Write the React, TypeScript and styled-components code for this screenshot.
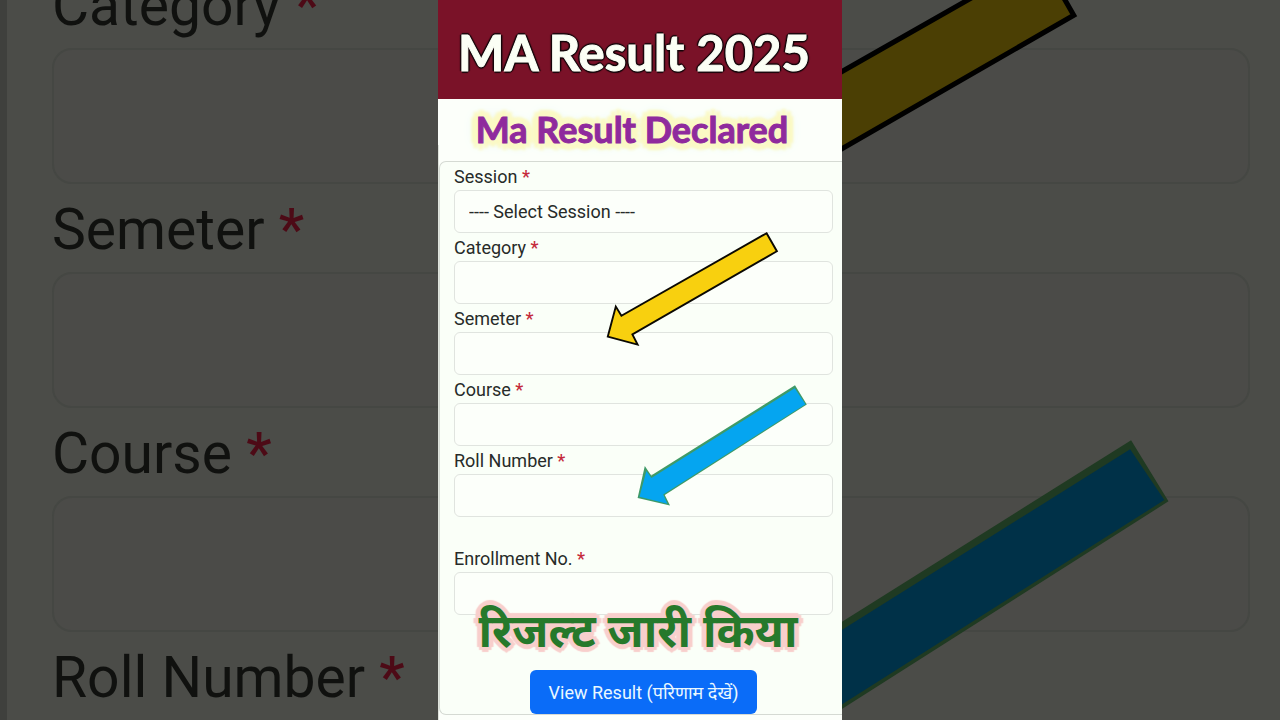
import React from "react";
import styled, { createGlobalStyle } from "styled-components";

const GlobalStyle = createGlobalStyle`
  *, *::before, *::after { box-sizing: border-box; }
  body {
    margin: 0;
    background: #4b4c48;
    font-family: Roboto, "Noto Sans", "Noto Sans Devanagari", sans-serif;
  }
`;

const Stage = styled.div`
  position: relative;
  display: flex;
  justify-content: center;
  min-height: 100vh;
  overflow: hidden;
`;

const Backdrop = styled.div`
  position: absolute;
  inset: 0;
  overflow: hidden;
  border-left: 7px solid #3f403d;
  background: #4b4c48;
`;

const BackdropFields = styled.div`
  display: flex;
  flex-direction: column;
  margin-top: -41px;
  padding: 0 30px 0 45px;
`;

const Phone = styled.main`
  position: relative;
  display: flex;
  flex-direction: column;
  width: 100%;
  max-width: 404px;
  background: #fcfffa;
`;

const Banner = styled.header`
  padding: 22px 12px 17px 0;
  background: #7a1228;
  text-align: center;
`;

const Title = styled.h1`
  margin: 0;
  color: #fbfff5;
  font: 700 49px/60px Lato, sans-serif;
  white-space: nowrap;
  -webkit-text-stroke: 1px #fbfff5;
  text-shadow: -2px 0 1px #14060a, 2px 0 1px #14060a, 0 -2px 1px #14060a, 0 2px 1px #14060a,
    1px 1px 1px #14060a, -1px -1px 1px #14060a;
`;

const Subtitle = styled.h2`
  position: relative;
  z-index: 1;
  margin: 0;
  padding: 14px 16px 0 0;
  color: #8f2a9d;
  font: 700 36px/32px Lato, sans-serif;
  text-align: center;
  white-space: nowrap;
  -webkit-text-stroke: 1px #8f2a9d;
  text-shadow: 5px 5px 3px #fbf9c4, -5px 5px 3px #fbf9c4, 5px -5px 3px #fbf9c4,
    -5px -5px 3px #fbf9c4, 7px 0 3px #fbf9c4, -7px 0 3px #fbf9c4, 0 7px 3px #fbf9c4,
    0 -7px 3px #fbf9c4, 0 0 3px #fbf9c4, 0 0 16px #cfe8f5;
`;

const Panel = styled.section`
  flex: 1;
  padding-top: 16px;
  border-left: 1px solid #dfe3dc;
`;

const Card = styled.form`
  position: relative;
  display: flex;
  flex-direction: column;
  padding: 0 9px 0 14px;
  border: 1px solid #d5dad3;
  border-right: 0;
  border-radius: 7px 0 0 7px;
  background: #fafff8;
`;

const Field = styled.div<{ $spaced?: boolean }>`
  display: flex;
  flex-direction: column;
  margin-top: ${(p) => (p.$spaced ? "27px" : "0")};
`;

const Label = styled.label<{ $large?: boolean }>`
  padding-top: ${(p) => (p.$large ? "4px" : "2px")};
  color: ${(p) => (p.$large ? "#10110f" : "#272b29")};
  font-size: ${(p) => (p.$large ? "57px" : "18px")};
  line-height: ${(p) => (p.$large ? "85px" : "26px")};
  white-space: nowrap;
`;

const Required = styled.span<{ $large?: boolean }>`
  color: ${(p) => (p.$large ? "#4d0a16" : "#c52b3c")};
  font-weight: 500;
`;

const TextBox = styled.input<{ $large?: boolean }>`
  width: 100%;
  height: ${(p) => (p.$large ? "136px" : "43px")};
  margin-bottom: ${(p) => (p.$large ? "-1px" : "0")};
  padding: 0 14px;
  border: ${(p) => (p.$large ? "2px solid #454743" : "1px solid #e0e4df")};
  border-radius: ${(p) => (p.$large ? "20px" : "6px")};
  background: ${(p) => (p.$large ? "#4b4b48" : "#fcfffa")};
  font: 18px Roboto, sans-serif;
  outline-color: #0d6efd;
`;

const SelectBox = styled.select`
  width: 100%;
  height: 43px;
  padding: 0 14px;
  border: 1px solid #e0e4df;
  border-radius: 6px;
  appearance: none;
  background: #fcfffa;
  color: #272b29;
  font: 18px Roboto, sans-serif;
`;

const Caption = styled.p`
  position: absolute;
  bottom: 50px;
  left: 0;
  right: 6px;
  margin: 0;
  color: #26792b;
  font: 700 46px/56px "Noto Sans Devanagari", "Noto Sans", sans-serif;
  text-align: center;
  white-space: nowrap;
  text-shadow: 3px 3px 1px #f8cfcc, -3px 3px 1px #f8cfcc, 3px -3px 1px #f8cfcc,
    -3px -3px 1px #f8cfcc, 5px 0 1px #f8cfcc, -5px 0 1px #f8cfcc, 0 5px 1px #f8cfcc,
    0 -5px 1px #f8cfcc;
  pointer-events: none;
`;

const SubmitButton = styled.button`
  align-self: center;
  height: 44px;
  margin: 55px 0 0;
  padding: 0 19px;
  border: 0;
  border-radius: 6px;
  background: #0a6cf8;
  color: #e9f8ff;
  font: 18px Roboto, "Noto Sans", "Noto Sans Devanagari", sans-serif;
  white-space: nowrap;
  cursor: pointer;
`;

const ArrowLayer = styled.svg`
  position: absolute;
  inset: 0;
  width: 100%;
  height: 100%;
  pointer-events: none;
`;

function Arrows({ dim = false }: { dim?: boolean }) {
  const c = dim
    ? { yellow: "#4b3f04", black: "#000000", blue: "#003148", green: "#1f3a22" }
    : { yellow: "#f8d00f", black: "#0b0903", blue: "#05a5f0", green: "#3f9a67" };
  return (
    <ArrowLayer
      viewBox="0 0 404 720"
      preserveAspectRatio={dim ? "xMidYMid slice" : "xMidYMin meet"}
      aria-hidden="true"
    >
      <path
        d="M328.6 233.2 L338.9 251.2 L194.4 334.4 L199.6 344.6 L169.8 336.6 L177.8 306.6 L183.4 315.8 Z"
        fill={c.yellow}
        stroke={c.black}
        strokeWidth={dim ? 1.6 : 1.9}
      />
      <path
        d="M357 385.3 L368.8 404.6 L226.8 494.9 L232 505.5 L199.6 498 L206.8 466 L213.2 475.6 Z"
        fill={c.green}
      />
      <path
        d="M356.7 388.2 L367.5 404.2 L225.2 494.4 L229.4 503.8 L201.5 496.8 L208.4 471 L213.4 478 Z"
        fill={c.blue}
      />
    </ArrowLayer>
  );
}

const backdropLabels = ["Category", "Semeter", "Course", "Roll Number"];

const textFields = [
  { id: "category", label: "Category" },
  { id: "semeter", label: "Semeter" },
  { id: "course", label: "Course" },
  { id: "roll", label: "Roll Number" },
  { id: "enrollment", label: "Enrollment No.", spaced: true },
];

export default function App() {
  return (
    <>
      <GlobalStyle />
      <Stage>
        <Backdrop aria-hidden="true">
          <BackdropFields>
            {backdropLabels.map((label) => (
              <Field key={label}>
                <Label $large htmlFor={`backdrop-${label}`}>
                  {label} <Required $large>*</Required>
                </Label>
                <TextBox $large id={`backdrop-${label}`} disabled />
              </Field>
            ))}
          </BackdropFields>
        </Backdrop>
        <Arrows dim />
        <Phone>
          <Banner>
            <Title>MA Result 2025</Title>
          </Banner>
          <Subtitle>Ma Result Declared</Subtitle>
          <Panel>
            <Card onSubmit={(e: React.FormEvent) => e.preventDefault()}>
              <Field>
                <Label htmlFor="session">
                  Session <Required>*</Required>
                </Label>
                <SelectBox id="session">
                  <option>---- Select Session ----</option>
                </SelectBox>
              </Field>
              {textFields.map((f) => (
                <Field key={f.id} $spaced={f.spaced}>
                  <Label htmlFor={f.id}>
                    {f.label} <Required>*</Required>
                  </Label>
                  <TextBox id={f.id} type="text" />
                </Field>
              ))}
              <SubmitButton type="submit">View Result (परिणाम देखें)</SubmitButton>
              <Caption>रिजल्ट जारी किया</Caption>
            </Card>
          </Panel>
          <Arrows />
        </Phone>
      </Stage>
    </>
  );
}
